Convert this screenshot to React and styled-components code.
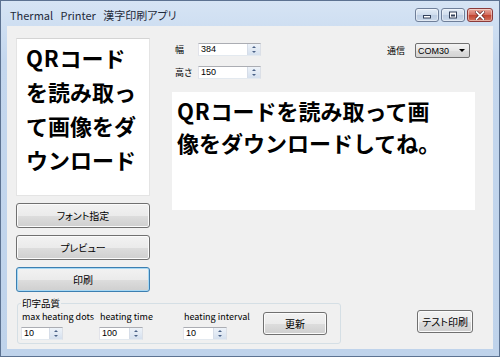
import React from 'react';
import styled, { createGlobalStyle, css } from 'styled-components';

const GlobalStyle = createGlobalStyle`
  html, body { margin: 0; padding: 0; background: #fff; }
  body {
    font-family: "Noto Sans CJK JP", "Noto Sans", sans-serif;
    font-feature-settings: "palt";
    color: #000;
  }
`;

const Window = styled.div`
  width: 500px;
  height: 357px;
  box-sizing: border-box;
  border: 1px solid #5c7291;
  background: linear-gradient(#d6e4f4, #c4d7ee 60px, #bfd3eb);
  padding: 0 6px 7px 6px;
  display: flex;
  flex-direction: column;
`;

const TitleBar = styled.div`
  height: 25px;
  box-sizing: border-box;
  padding-top: 7px;
  display: flex;
  align-items: flex-start;
  justify-content: space-between;
`;

const Title = styled.div`
  margin-left: 3px;
  font-size: 11px;
  line-height: 14px;
  white-space: pre;
  color: #1e2a3a;
`;

const Controls = styled.div`
  display: flex;
  gap: 2px;
`;

const CtlButton = styled.div`
  width: ${p => (p.$close ? 26 : 24)}px;
  height: 14px;
  box-sizing: border-box;
  border: 1px solid ${p => (p.$close ? '#8a3a3a' : '#6f7f99')};
  border-radius: 3px;
  display: flex;
  align-items: center;
  justify-content: center;
  box-shadow: inset 0 0 0 1px rgba(255, 255, 255, 0.45);
  ${p => p.$close
    ? css`background: linear-gradient(#e9a99b, #d36b5c 50%, #c0432f 51%, #d4735c);`
    : css`background: linear-gradient(#e4edf7, #cfdcec 50%, #bccde3 51%, #cbd9ea);`}
`;

const Client = styled.div`
  flex: 1;
  background: #f0f0f0;
  padding: 12px 18px 0 9px;
  display: flex;
  flex-direction: column;
`;

const TopArea = styled.div`
  display: flex;
  align-items: flex-start;
`;

const LeftCol = styled.div`
  width: 134px;
  display: flex;
  flex-direction: column;
  gap: 7px;
`;

const BigText = css`
  background: #fff;
  font-size: 22px;
  font-weight: 700;
  font-feature-settings: normal;
  white-space: nowrap;
  overflow: hidden;
`;

const Latin = styled.span`
  letter-spacing: 0.8px;
`;

const Preview = styled.div`
  ${BigText}
  height: 158px;
  box-sizing: border-box;
  border: 1px solid #e4e4e4;
  border-top-color: #d4d4d4;
  padding: 1px 0 0 9px;
  line-height: 34px;
`;

const Button = styled.div`
  height: ${p => p.$h || 25}px;
  width: ${p => (p.$w ? `${p.$w}px` : 'auto')};
  margin-top: ${p => p.$mt || 0}px;
  margin-right: ${p => p.$mr || 0}px;
  box-sizing: border-box;
  border: 1px solid ${p => (p.$focused ? '#3c7fb1' : '#707070')};
  border-radius: 3px;
  background: linear-gradient(#f2f2f2, #ebebeb 50%, #dddddd 51%, #cfcfcf);
  box-shadow: inset 0 0 0 1px ${p => (p.$focused ? '#a7d8f4' : '#fbfbfb')};
  display: flex;
  align-items: center;
  justify-content: center;
  font-size: 10px;
  line-height: 12px;
  flex-shrink: 0;
`;

const MainCol = styled.div`
  margin-left: 22px;
  width: 303px;
  padding-top: 5px;
  display: flex;
  flex-direction: column;
`;

const SettingsRow = styled.div`
  display: flex;
  justify-content: space-between;
  align-items: flex-start;
  padding-right: 5px;
`;

const SizeFields = styled.div`
  display: flex;
  flex-direction: column;
  gap: 10px;
`;

const FieldRow = styled.div`
  display: flex;
  align-items: center;
`;

const Label = styled.span`
  font-size: 9px;
  line-height: 12px;
  white-space: nowrap;
  width: ${p => (p.$w ? `${p.$w}px` : 'auto')};
  padding-left: ${p => p.$pl || 0}px;
  box-sizing: border-box;
`;

const SpinBox = styled.div`
  display: flex;
  width: ${p => p.$w}px;
  height: 13px;
  box-sizing: border-box;
  border: 1px solid;
  border-color: #abadb3 #dbdfe6 #e3e9ef #e2e3ea;
  background: #fff;
`;

const SpinValue = styled.span`
  flex: 1;
  font: 9px/11px "Liberation Sans", sans-serif;
  padding-left: 2px;
`;

const SpinButtons = styled.div`
  width: 12px;
  display: flex;
  flex-direction: column;
  border-left: 1px solid #d6dde8;
  background: linear-gradient(#eef3f9, #d5e0ee);
`;

const SpinHalf = styled.div`
  flex: 1;
  display: flex;
  align-items: center;
  justify-content: center;
  &::after {
    content: '';
    border-left: 2.5px solid transparent;
    border-right: 2.5px solid transparent;
    ${p => (p.$down
      ? css`border-top: 2.5px solid #4b6287;`
      : css`border-bottom: 2.5px solid #4b6287;`)}
  }
`;

const PortField = styled.div`
  display: flex;
  align-items: center;
  gap: 10px;
`;

const Select = styled.div`
  width: 55px;
  height: 15px;
  box-sizing: border-box;
  border: 1px solid #707070;
  border-radius: 2px;
  background: linear-gradient(#f3f3f3, #e6e6e6 50%, #dddddd 51%, #d3d3d3);
  display: flex;
  align-items: center;
  justify-content: space-between;
  padding: 0 4px 0 2px;
  font: 9px/12px "Liberation Sans", sans-serif;
  &::after {
    content: '';
    border-left: 3px solid transparent;
    border-right: 3px solid transparent;
    border-top: 3px solid #000;
  }
`;

const TextArea = styled.div`
  ${BigText}
  margin-top: 13px;
  height: 116px;
  padding: 2px 0 0 5px;
  line-height: 32px;
`;

const BottomArea = styled.div`
  margin-top: 5px;
  display: flex;
  align-items: flex-start;
`;

const Group = styled.fieldset`
  margin: 0 0 0 1px;
  width: 324px;
  box-sizing: border-box;
  border: 1px solid #d5dfe5;
  border-radius: 3px;
  padding: 2px 0 3px 3px;
  display: flex;
  align-items: flex-start;
  min-width: 0;
`;

const Legend = styled.legend`
  padding: 0 1px;
  margin: 0;
  font-size: 9.5px;
  line-height: 12px;
`;

const ParamCol = styled.div`
  width: ${p => p.$w}px;
  display: flex;
  flex-direction: column;
  gap: 4px;
`;

const ParamLabel = styled.span`
  padding-left: 1px;
  font: 9px/12px "Noto Sans CJK JP", sans-serif;
  white-space: nowrap;
`;

const Spacer = styled.div`
  margin-left: auto;
`;

function Spin({ value, w }) {
  return (
    <SpinBox $w={w}>
      <SpinValue>{value}</SpinValue>
      <SpinButtons>
        <SpinHalf />
        <SpinHalf $down />
      </SpinButtons>
    </SpinBox>
  );
}

const params = [
  { label: 'max heating dots', value: '10', col: 78, w: 42 },
  { label: 'heating time', value: '100', col: 84, w: 44 },
  { label: 'heating interval', value: '10', col: 80, w: 44 },
];

export default function App() {
  return (
    <>
      <GlobalStyle />
      <Window>
        <TitleBar>
          <Title>{'Thermal   Printer   漢字印刷アプリ'}</Title>
          <Controls>
            <CtlButton>
              <svg width="10" height="8" viewBox="0 0 10 8">
                <rect x="1.5" y="4.5" width="7" height="2.5" fill="#fff" stroke="#33415a" strokeWidth="1" />
              </svg>
            </CtlButton>
            <CtlButton>
              <svg width="10" height="8" viewBox="0 0 10 8">
                <rect x="1" y="0.5" width="8" height="7" fill="#33415a" />
                <rect x="2" y="1.5" width="6" height="5" fill="#fff" />
                <rect x="3" y="3.5" width="4" height="2" fill="#33415a" />
              </svg>
            </CtlButton>
            <CtlButton $close>
              <svg width="10" height="9" viewBox="0 0 10 9">
                <path d="M1.5 1 L8.5 8 M8.5 1 L1.5 8" stroke="#5a1f1f" strokeWidth="3.2" strokeLinecap="square" />
                <path d="M1.5 1 L8.5 8 M8.5 1 L1.5 8" stroke="#fff" strokeWidth="1.8" strokeLinecap="square" />
              </svg>
            </CtlButton>
          </Controls>
        </TitleBar>
        <Client>
          <TopArea>
            <LeftCol>
              <Preview>
                <Latin>QR</Latin>コード<br />を読み取っ<br />て画像をダ<br />ウンロード
              </Preview>
              <Button>フォント指定</Button>
              <Button>プレビュー</Button>
              <Button $focused>印刷</Button>
            </LeftCol>
            <MainCol>
              <SettingsRow>
                <SizeFields>
                  <FieldRow>
                    <Label $w={26} $pl={3}>幅</Label>
                    <Spin value="384" w={63} />
                  </FieldRow>
                  <FieldRow>
                    <Label $w={26} $pl={3}>高さ</Label>
                    <Spin value="150" w={63} />
                  </FieldRow>
                </SizeFields>
                <PortField>
                  <Label>通信</Label>
                  <Select>COM30</Select>
                </PortField>
              </SettingsRow>
              <TextArea>
                <Latin>QR</Latin>コードを読み取って画<br />像をダウンロードしてね。
              </TextArea>
            </MainCol>
          </TopArea>
          <BottomArea>
            <Group>
              <Legend>印字品質</Legend>
              {params.map(p => (
                <ParamCol key={p.label} $w={p.col}>
                  <ParamLabel>{p.label}</ParamLabel>
                  <Spin value={p.value} w={p.w} />
                </ParamCol>
              ))}
              <Button $w={64} $h={23} $mt={1}>更新</Button>
            </Group>
            <Spacer />
            <Button $w={56} $h={23} $mt={13} $mr={2}>テスト印刷</Button>
          </BottomArea>
        </Client>
      </Window>
    </>
  );
}
